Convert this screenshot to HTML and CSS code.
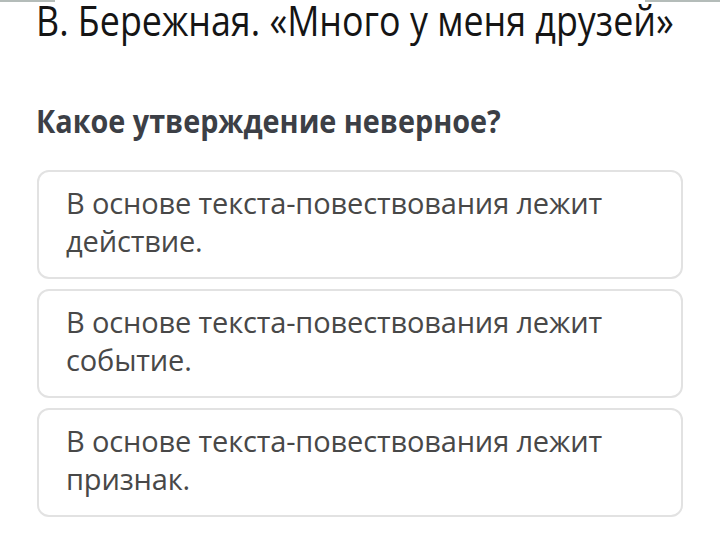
FILE: index.html
```html
<!DOCTYPE html>
<html lang="ru">
<head>
<meta charset="utf-8">
<link rel="stylesheet" href="styles.css">
</head>
<body>
<div class="topbar"><span class="seg seg-left"></span><span class="seg seg-right"></span></div>
<main class="page">
  <h1 class="title">В. Бережная. «Много у меня друзей»</h1>
  <h2 class="question">Какое утверждение неверное?</h2>
  <div class="options">
    <div class="option"><p class="option-text">В основе текста-повествования лежит действие.</p></div>
    <div class="option"><p class="option-text">В основе текста-повествования лежит событие.</p></div>
    <div class="option"><p class="option-text">В основе текста-повествования лежит признак.</p></div>
  </div>
</main>
</body>
</html>
```
FILE: styles.css
```css
html, body { margin: 0; padding: 0; background: #fff; }
body { width: 720px; height: 536px; overflow: hidden; position: relative; font-family: "Open Sans", "Noto Sans", sans-serif; }
.topbar { position: absolute; top: 0; left: 0; right: 0; height: 2px; }
.seg { position: absolute; top: 0; height: 2px; background: #b4bcb9; }
.seg-left { left: 0; width: 55px; }
.seg-right { right: 0; width: 75px; }
.page { padding: 0 37px 0 36px; }
.title { margin: 0; font-weight: 400; font-size: 42px; line-height: 40px; color: #151515; white-space: nowrap; transform: scaleX(0.853); transform-origin: left center; }
.question { margin: 61px 0 0; font-weight: 700; font-size: 32px; line-height: 40px; color: #3c3f46; white-space: nowrap; transform: scaleX(0.899); transform-origin: left center; }
.options { margin: 29px 0 0 1px; display: flex; flex-direction: column; gap: 10px; }
.option { border: 2px solid #e2e2e2; border-radius: 12px; height: 109px; box-sizing: border-box; padding: 12px 27px; }
.option-text { margin: 0; font-size: 29px; line-height: 38px; letter-spacing: -0.15px; color: #484848; }
```
